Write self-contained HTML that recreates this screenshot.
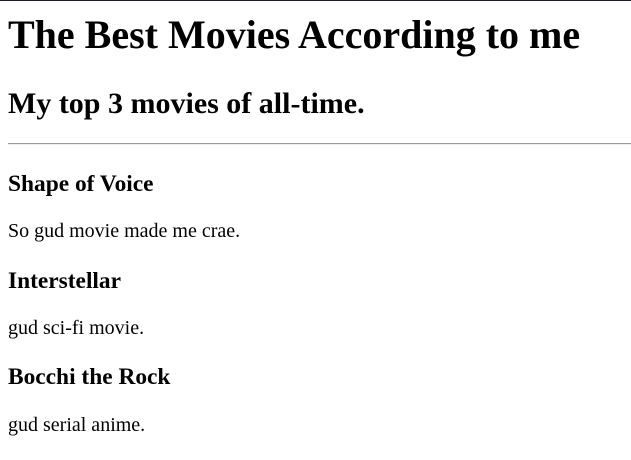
<!DOCTYPE html>
<html><head><style>
html,body{margin:0;padding:0;background:#fff;width:631px;height:460px;overflow:hidden;position:relative;font-family:"Liberation Serif",serif;color:#000}
.t{position:absolute;left:8px;margin:0;line-height:1;white-space:nowrap}
.top{position:absolute;left:0;top:0;width:631px;height:1px;background:#1e1f2e}
hr{position:absolute;left:8px;top:143px;width:623px;margin:0;border:0;border-top:1px solid #9a9a9a;border-bottom:1px solid #eee;height:0}
</style></head><body>
<div class="top"></div>
<h1 class="t" style="top:15px;font-size:40px;font-weight:bold">The Best Movies According to me</h1>
<h2 class="t" style="top:89px;font-size:30px;font-weight:bold">My top 3 movies of all-time.</h2>
<hr>
<h3 class="t" style="top:173px;font-size:23.4px;font-weight:bold">Shape of Voice</h3>
<p class="t" style="top:221px;font-size:20px">So gud movie made me crae.</p>
<h3 class="t" style="top:270px;font-size:23.4px;font-weight:bold">Interstellar</h3>
<p class="t" style="top:318px;font-size:20px">gud sci-fi movie.</p>
<h3 class="t" style="top:366px;font-size:23.4px;font-weight:bold">Bocchi the Rock</h3>
<p class="t" style="top:415px;font-size:20px">gud serial anime.</p>
</body></html>
